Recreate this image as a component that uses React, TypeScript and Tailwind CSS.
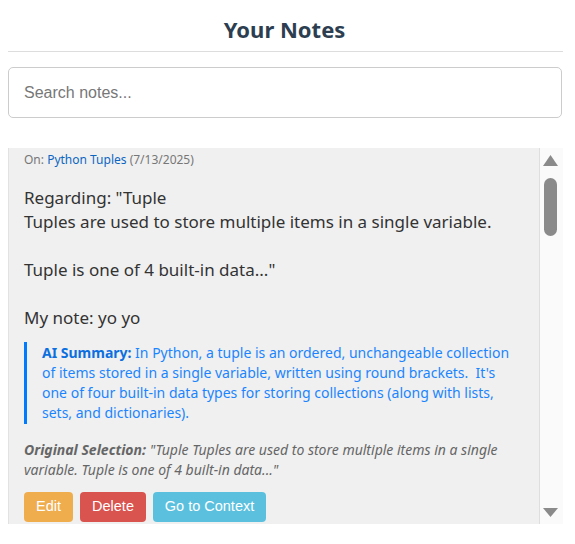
import React from "react";

const body = '"Segoe UI", "Noto Sans", sans-serif';

export default function App() {
  return (
    <div className="w-[575px] h-[544px] bg-white px-2 overflow-hidden" style={{ fontFamily: body }}>
      {/* Header */}
      <h2 className="pt-[15px] pb-[8px] text-center text-[22px] leading-[28px] font-bold text-[#2c3e50] border-b border-[#dddddd] w-[555px] pr-[2px]">
        Your Notes
      </h2>

      {/* Search */}
      <input
        type="text"
        placeholder="Search notes..."
        className="mt-[15px] w-[554px] h-[51px] px-[15px] rounded-[5px] border border-[#cccccc] text-[16px] placeholder:text-[#777777] outline-none"
        style={{ fontFamily: '"Liberation Sans", Arial, sans-serif' }}
      />

      {/* Notes list */}
      <div className="mt-[30px] flex h-[376px] w-[555px]">
        <div className="flex-1 overflow-hidden bg-[#f0f0f0] border-l border-[#e2e2e2] border-r border-r-[#dedede] pl-[15px] pr-4 pt-[4px]">
          <div className="text-[12px] leading-4 text-[#777777]">
            On: <a href="#" className="text-[#0b66c2]">Python Tuples</a> (7/13/2025)
          </div>

          <p className="mt-[18px] text-[17px] leading-[24px] text-[#333333] whitespace-pre-wrap">
            {'Regarding: "Tuple\nTuples are used to store multiple items in a single variable.\n\nTuple is one of 4 built-in data..."\n\nMy note: yo yo'}
          </p>

          <div className="mt-3 border-l-[3px] border-[#007bff] pl-[15px] py-px text-[14px] leading-[20px] text-[#1a85ff]">
            <strong className="font-bold text-[#0b6fe0]">AI Summary:</strong> In Python, a tuple is an ordered, unchangeable collection
            of items stored in a single variable, written using round brackets.&nbsp; It's one of four built-in data types for storing
            collections (along with lists, sets, and dictionaries).
          </div>

          <p className="mt-4 text-[14px] leading-[20px] italic text-[#666666]">
            <strong className="font-bold">Original Selection:</strong> "Tuple Tuples are used to store multiple items in a single
            variable. Tuple is one of 4 built-in data..."
          </p>

          <div className="mt-[12px] flex gap-[7px]" style={{ fontFamily: '"Liberation Sans", Arial, sans-serif' }}>
            <button className="h-[30px] w-[49px] rounded-[4px] bg-[#f0ad4e] text-white text-[14.5px]">Edit</button>
            <button className="h-[30px] w-[66px] rounded-[4px] bg-[#d9534f] text-white text-[14.5px]">Delete</button>
            <button className="h-[30px] w-[113px] rounded-[4px] bg-[#5bc0de] text-white text-[14.5px]">Go to Context</button>
          </div>
        </div>

        {/* Scrollbar */}
        <div className="w-[23px] bg-[#fafafa] flex flex-col items-center pt-[7px] pb-[7px]">
          <svg width="15" height="11" viewBox="0 0 15 11" className="-ml-[2px]">
            <polygon points="7.5,0 15,11 0,11" fill="#8a8a8a" />
          </svg>
          <div className="mt-3 -ml-[2px] w-[13px] h-[58px] rounded-full bg-[#8a8a8a]" />
          <div className="flex-1" />
          <svg width="15" height="9" viewBox="0 0 15 9" className="-ml-[2px]">
            <polygon points="0,0 15,0 7.5,9" fill="#8a8a8a" />
          </svg>
        </div>
      </div>
    </div>
  );
}
